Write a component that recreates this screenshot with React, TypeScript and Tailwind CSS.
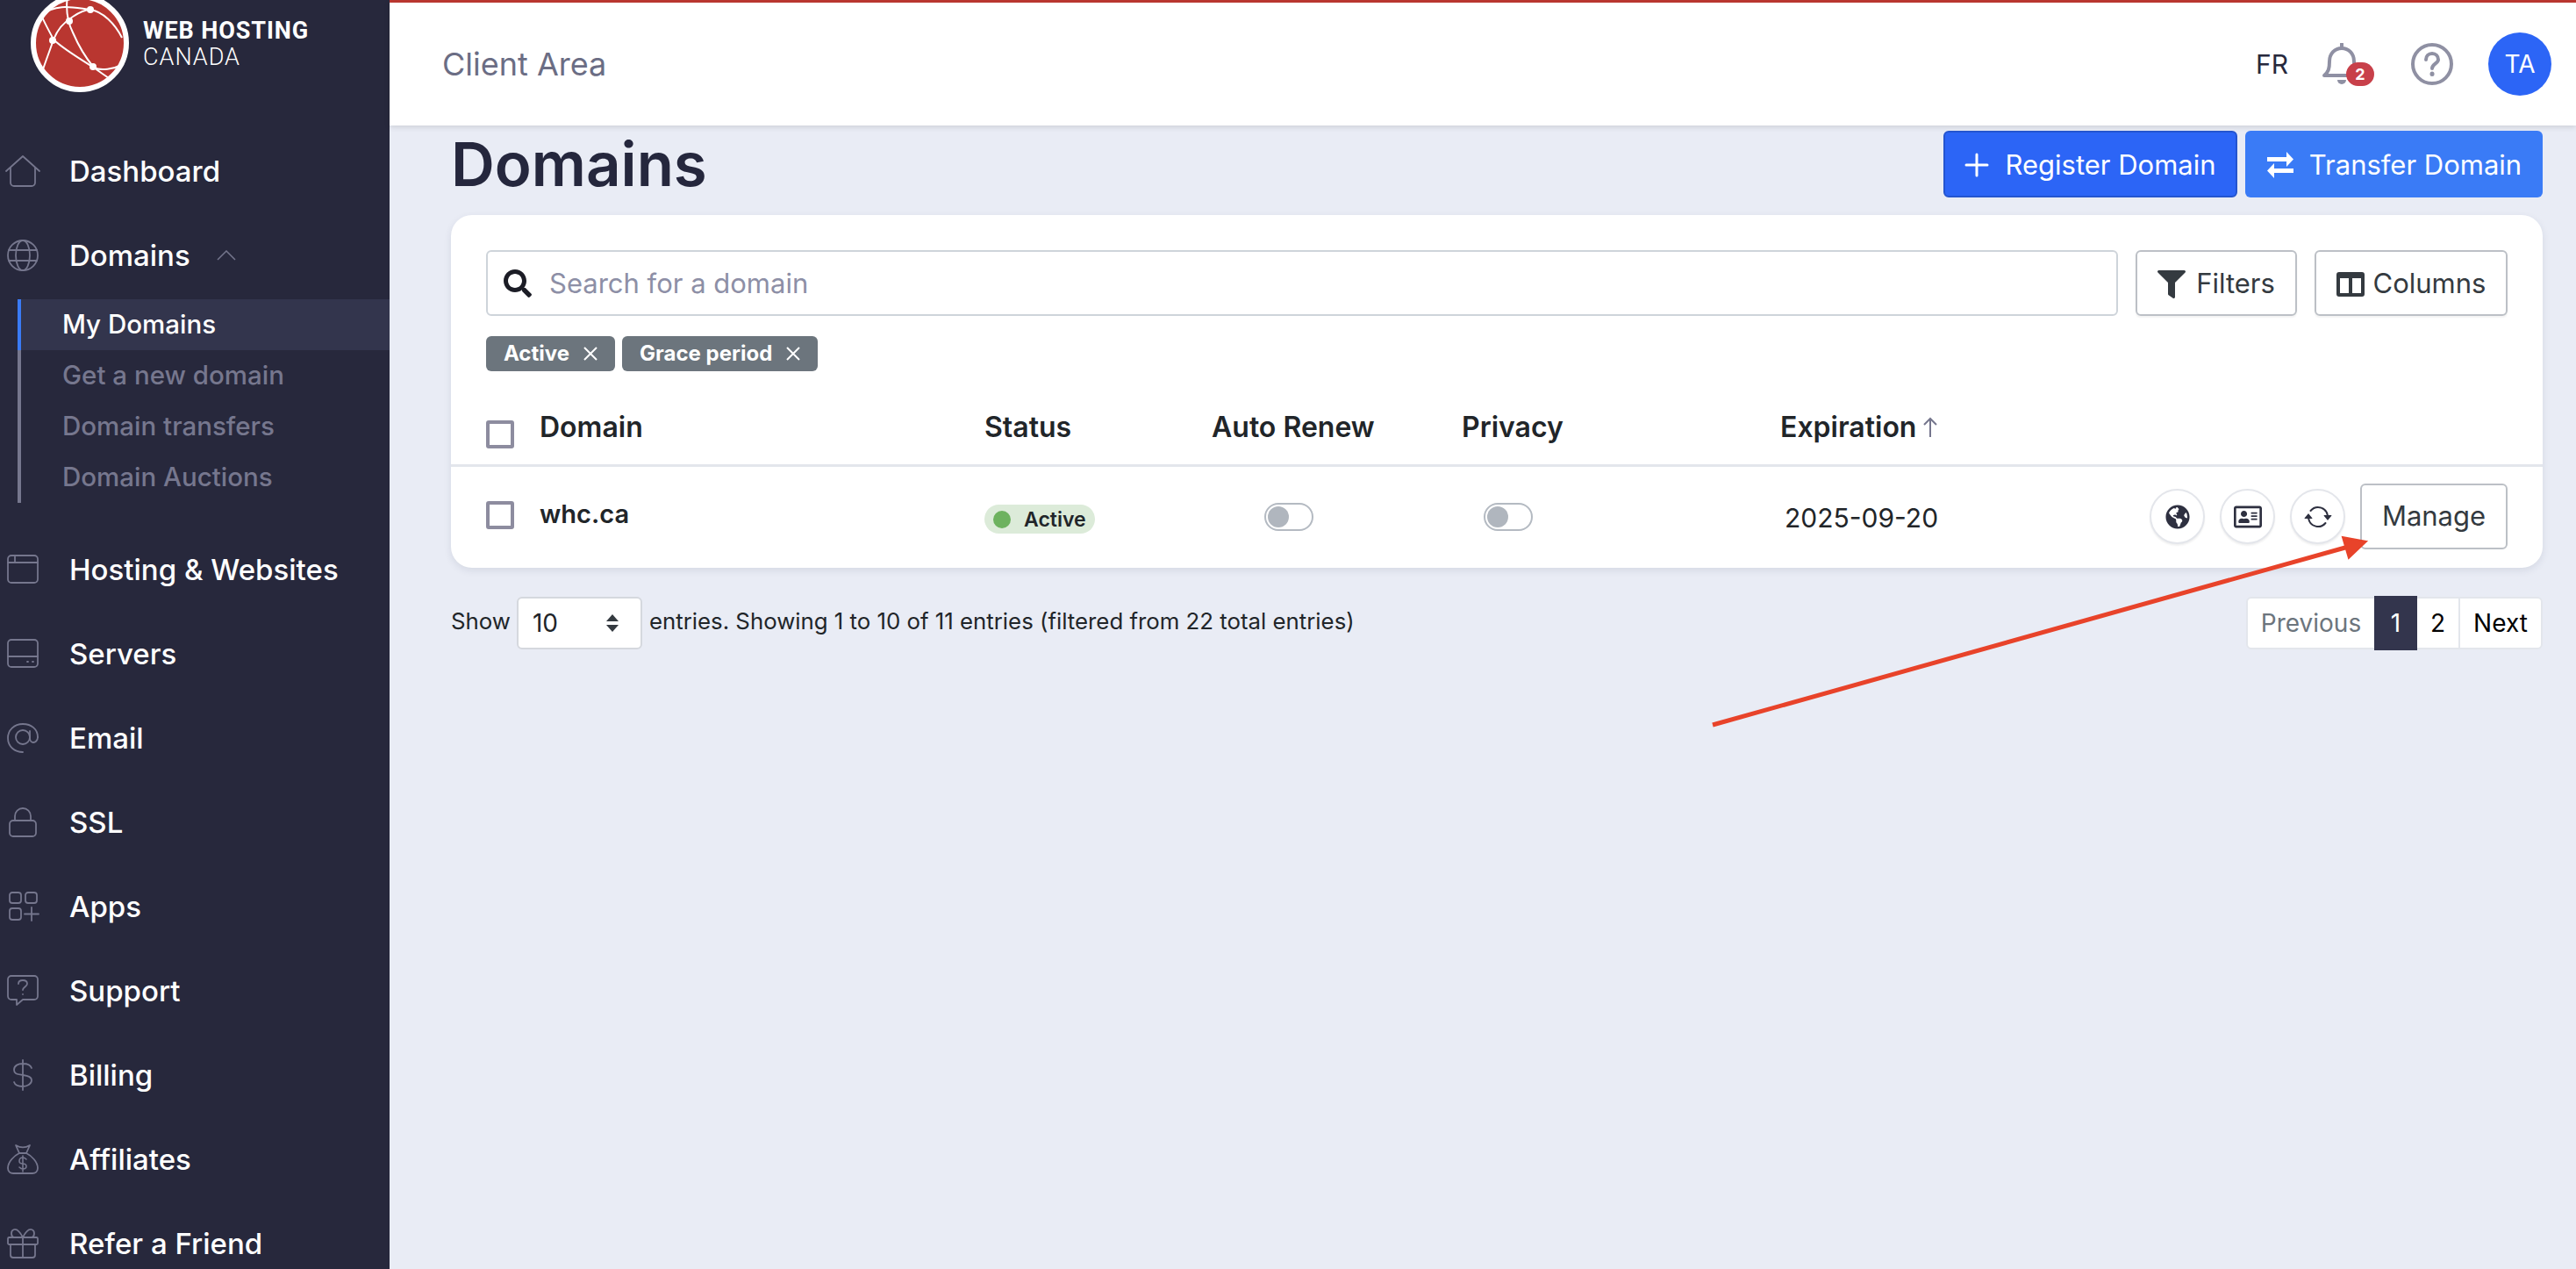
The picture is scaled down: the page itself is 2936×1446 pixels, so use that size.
import React from 'react';
import { FaFilter, FaGlobeAmericas, FaRegAddressCard, FaSearch } from 'react-icons/fa';
import { BsArrowRepeat } from 'react-icons/bs';

const ic = (children: React.ReactNode) => (
  <svg viewBox="0 0 40 36" fill="none" stroke="#75768d" strokeWidth="1.8" strokeLinecap="round" strokeLinejoin="round" className="h-9 w-10">
    {children}
  </svg>
);

const icons: Record<string, React.ReactNode> = {
  home: ic(<><path d="M1 18 20 1l19 17" /><path d="M6 14v17a4 4 0 0 0 4 4h20a4 4 0 0 0 4-4V14" /></>),
  globe: ic(<><circle cx="20" cy="18" r="17" /><ellipse cx="20" cy="18" rx="8" ry="17" /><path d="M4 12h32M4 24h32" /></>),
  browser: ic(<><rect x="3" y="2" width="34" height="31" rx="4" /><path d="M3 10h34M11 2v8" /></>),
  server: ic(<><rect x="3" y="2" width="34" height="31" rx="4" /><path d="M3 21h34M25 27h1M31 27h1" /></>),
  at: ic(<><path d="M37 17C37 8 30 2 20 2S3 9 3 18c0 10 8 16 17 16" /><circle cx="20" cy="17" r="8" /><path d="M28 10v8c0 3 2 5 4 5s5-2 5-6" /></>),
  lock: ic(<><rect x="5" y="16" width="30" height="18" rx="4" /><path d="M11 16v-5c0-5 4-9 9-9s9 4 9 9v5" /></>),
  apps: ic(<><rect x="5" y="2" width="13" height="12" rx="3" /><rect x="23" y="2" width="13" height="12" rx="3" /><rect x="5" y="20" width="13" height="13" rx="3" /><path d="M30 19v15M22 26.500h16" /></>),
  support: ic(<><path d="M7 1h26a4 4 0 0 1 4 4v19a4 4 0 0 1-4 4H20l-7 6v-6H7a4 4 0 0 1-4-4V5a4 4 0 0 1 4-4Z" /><path d="M15 10c0-3 2-4 5-4s5 1 5 4-5 4-5 7M20 22v0" /></>),
  dollar: ic(<><path d="M20 1v34M30 10c-1-3-5-5-10-5S10 7 10 12s4 5 10 6 10 2 10 6-5 7-10 7-9-2-10-5" /></>),
  bag: ic(<><path d="M12 2c5 3 11 3 16 0l-4 9h-8Z" /><path d="M16 11C10 14 3 21 3 28c0 4 3 6 6 6h22c3 0 6-2 6-6 0-7-7-14-13-17" /><path d="M24 18c-1-1-2-2-4-2s-4 1-4 4 2 3 4 3 4 1 4 3-2 3-4 3-3-1-4-2M20 14v18" strokeWidth="1.6" /></>),
  gift: ic(<><rect x="3" y="11" width="34" height="8" rx="1.500" /><path d="M6 19v12a3 3 0 0 0 3 3h22a3 3 0 0 0 3-3V19M20 11v23M20 11c-3-6-6-10-10-9s-4 8 0 9M20 11c3-6 6-10 10-9s4 8 0 9" /></>),
};

const lowerNav = [
  ['browser', 'Hosting & Websites'],
  ['server', 'Servers'],
  ['at', 'Email'],
  ['lock', 'SSL'],
  ['apps', 'Apps'],
  ['support', 'Support'],
  ['dollar', 'Billing'],
  ['bag', 'Affiliates'],
  ['gift', 'Refer a Friend'],
];

function NavItem({ icon, label, children }: { icon: string; label: string; children?: React.ReactNode }) {
  return (
    <div className="flex h-[96px] shrink-0 items-center">
      <span className="flex w-[79px] pl-[6px]">{icons[icon]}</span>
      <span className="pt-[1px] text-[33px] font-medium text-white">{label}</span>
      {children}
    </div>
  );
}

function Logo() {
  return (
    <div className="relative h-[147px] shrink-0">
      <svg viewBox="0 0 112 112" className="absolute left-[35px] top-[-7px] h-[112px] w-[112px]">
        <circle cx="56" cy="56" r="53" fill="#b93630" stroke="#fff" strokeWidth="6" />
        <g fill="none" stroke="#fff" strokeWidth="2">
          <path d="M12 24C30 10 50 16 68 18c14 2 28 16 36 32" />
          <path d="M42 2c-2 14 0 30 6 42 6 14 14 28 24 40 8 4 22 2 34-4" />
          <path d="M12 24c4 10 10 20 14 28 10 10 30 22 46 32 8 6 14 10 20 14" />
          <path d="M26 52c4-10 12-20 22-26 6-4 14-8 20-8" />
          <path d="M26 52c-4 12-8 22-12 34" />
        </g>
        <g fill="#fff">
          <circle cx="68" cy="18" r="4" />
          <circle cx="44" cy="31" r="4" />
          <circle cx="25" cy="53" r="4" />
          <circle cx="71" cy="83" r="4" />
        </g>
      </svg>
      <div className="absolute left-[163px] top-[18px] font-['Roboto',sans-serif] text-white">
        <div className="text-[27px] font-bold leading-[34px] tracking-[0.9px]">WEB HOSTING</div>
        <div className="text-[27px] font-light leading-[26px] tracking-[1px]">CANADA</div>
      </div>
    </div>
  );
}

function Sidebar() {
  return (
    <aside className="flex h-full w-[444px] shrink-0 flex-col overflow-hidden bg-[#27283c] font-['Inter',sans-serif]">
      <Logo />
      <NavItem icon="home" label="Dashboard" />
      <NavItem icon="globe" label="Domains">
        <svg viewBox="0 0 22 12" fill="none" stroke="#75768d" strokeWidth="1.5" className="ml-[30px] h-[12px] w-[22px]">
          <path d="M1 11 11 1l10 10" />
        </svg>
      </NavItem>
      <div className="mt-[2px] ml-[20px] flex shrink-0 flex-col border-l-4 border-[#76778e] text-[29.5px] font-medium text-[#76778e]">
        <div className="relative -ml-1 flex h-[58px] items-center border-l-4 border-[#3a7bf6] bg-[#33354d] pb-[2px] pl-[47px] text-white">My Domains</div>
        <div className="flex h-[58px] items-center pb-[2px] pl-[47px]">Get a new domain</div>
        <div className="flex h-[58px] items-center pb-[2px] pl-[47px]">Domain transfers</div>
        <div className="flex h-[58px] items-center pb-[2px] pl-[47px]">Domain Auctions</div>
      </div>
      <div className="mt-[28px] flex flex-col">
        {lowerNav.map(([icon, label]) => (
          <NavItem key={label} icon={icon} label={label} />
        ))}
      </div>
    </aside>
  );
}

function Header() {
  return (
    <header className="flex h-[143px] shrink-0 items-center border-t-[3px] border-[#b93630] bg-white pl-[60px] pr-[28px] shadow-[0_2px_6px_rgba(0,0,0,0.12)]">
      <span className="text-[36px] text-[#6b6d84]">Client Area</span>
      <div className="ml-auto flex items-center">
        <span className="text-[30px] text-[#27283c]">FR</span>
        <div className="relative ml-[38px] h-[48px] w-[52px]">
          <svg viewBox="0 0 52 48" fill="none" stroke="#8f90a3" strokeWidth="4" strokeLinejoin="round" className="h-[48px] w-[52px]">
            <path d="M3 37c5-4 6-8 6-16 0-9 6-15 14-15s14 6 14 15c0 8 1 12 6 16Z" />
            <path d="M23 1v5" strokeLinecap="round" />
            <path d="M18 42a5 5 0 0 0 10 0Z" fill="#8f90a3" stroke="none" />
          </svg>
          <span className="absolute left-[28px] top-[22px] flex h-[27px] w-[32px] items-center justify-center rounded-full bg-[#c8404a] text-[18px] font-bold text-white">2</span>
        </div>
        <svg viewBox="0 0 48 48" fill="none" stroke="#8f90a3" strokeWidth="4" strokeLinecap="round" className="ml-[50px] h-[48px] w-[48px]">
          <circle cx="24" cy="24" r="22" />
          <path d="M17 19c0-4 3-7 7-7s7 3 7 7-7 5-7 10" />
          <path d="M24 35v.5" strokeWidth="5" />
        </svg>
        <span className="ml-[40px] flex h-[72px] w-[72px] items-center justify-center rounded-full bg-[#2c65f6] text-[28px] text-white">TA</span>
      </div>
    </header>
  );
}

function Checkbox() {
  return <span className="block h-[32px] w-[32px] rounded-[3px] border-4 border-[#8d8c9f] bg-white" />;
}

function Toggle() {
  return (
    <span className="flex h-[32px] w-[56px] items-center rounded-full border-2 border-[#b4bac2] bg-white pl-[2px]">
      <span className="block h-[24px] w-[24px] rounded-full bg-[#b0b6be]" />
    </span>
  );
}

function Tag({ label }: { label: string }) {
  return (
    <span className="flex h-[40px] items-center gap-[16px] rounded-[6px] bg-[#6c757d] pl-[20px] pr-[20px] text-[24px] font-bold text-white">
      {label}
      <svg viewBox="0 0 16 16" stroke="#fff" strokeWidth="2" className="h-[16px] w-[16px]">
        <path d="M1 1l14 14M15 1 1 15" />
      </svg>
    </span>
  );
}

function RoundBtn({ children }: { children: React.ReactNode }) {
  return (
    <button className="flex h-[63px] w-[63px] items-center justify-center rounded-full border-2 border-[#e4e6eb] bg-white text-[#2e3040] shadow-[0_2px_2px_rgba(0,0,0,0.06)]">
      {children}
    </button>
  );
}

function Toolbar() {
  return (
    <div className="flex gap-[20px]">
      <div className="flex h-[75px] flex-1 items-center gap-[20px] rounded-[6px] border-2 border-[#ced4da] pl-[18px]">
        <FaSearch className="h-[32px] w-[32px] text-[#1c1d26]" />
        <input placeholder="Search for a domain" className="flex-1 bg-transparent pt-[2px] text-[31px] outline-none placeholder:text-[#8d8fa6]" />
      </div>
      <button className="flex h-[75px] w-[184px] items-center justify-center gap-[12px] rounded-[6px] border-2 border-[#bcc0c6] pt-[2px] text-[31px] text-[#343a40] shadow-[0_2px_2px_rgba(0,0,0,0.05)]">
        <FaFilter className="h-[32px] w-[32px]" />
        Filters
      </button>
      <button className="flex h-[75px] w-[220px] items-center justify-center gap-[10px] rounded-[6px] border-2 border-[#bcc0c6] pt-[2px] text-[31px] text-[#343a40] shadow-[0_2px_2px_rgba(0,0,0,0.05)]">
        <svg viewBox="0 0 32 28" className="h-[28px] w-[32px]">
          <path fillRule="evenodd" fill="#343a40" d="M3 0h26a3 3 0 0 1 3 3v22a3 3 0 0 1-3 3H3a3 3 0 0 1-3-3V3a3 3 0 0 1 3-3Zm1 7v17h10V7Zm14 0v17h10V7Z" />
        </svg>
        Columns
      </button>
    </div>
  );
}

function DomainsTable() {
  return (
    <div>
      <div className="flex h-[109px] items-center border-b-[3px] border-[#e3e6ec] px-[40px] pt-[21px] text-[32px] font-semibold text-[#212529]">
        <span className="w-[61px] pt-[16px]"><Checkbox /></span>
        <span className="w-[507px] leading-none">Domain</span>
        <span className="w-[259px] leading-none">Status</span>
        <span className="w-[285px] leading-none">Auto Renew</span>
        <span className="w-[363px] leading-none">Privacy</span>
        <span className="flex items-center gap-[6px] leading-none">
          Expiration
          <svg viewBox="0 0 20 24" fill="none" stroke="#75768d" strokeWidth="2" className="h-[24px] w-[20px]">
            <path d="M10 23V2M3 9l7-7 7 7" />
          </svg>
        </span>
      </div>
      <div className="flex h-[113px] items-center px-[40px] text-[#212529]">
        <span className="w-[61px] pb-[3px]"><Checkbox /></span>
        <span className="w-[507px] pb-[5px] text-[29px] font-semibold">whc.ca</span>
        <span className="w-[260px] pt-[6px]">
          <span className="inline-flex h-[33px] w-[126px] items-center gap-[15px] rounded-full bg-[#dcebd9] pl-[10px] text-[23px] font-semibold">
            <span className="h-[20px] w-[20px] rounded-full bg-[#6db25f]" />
            <span className="pt-[2px]">Active</span>
          </span>
        </span>
        <span className="w-[284px] pl-[59px]"><Toggle /></span>
        <span className="w-[363px] pl-[25px]"><Toggle /></span>
        <span className="pl-[5px] pt-[3px] text-[30px]">2025-09-20</span>
        <div className="ml-auto flex items-center gap-[17px]">
          <RoundBtn><FaGlobeAmericas className="h-[28px] w-[28px]" /></RoundBtn>
          <RoundBtn><FaRegAddressCard className="h-[32px] w-[32px]" /></RoundBtn>
          <RoundBtn><BsArrowRepeat className="h-[32px] w-[32px]" /></RoundBtn>
          <button className="flex h-[75px] w-[168px] items-center justify-center rounded-[6px] border-2 border-[#bcc0c6] text-[31px] text-[#343a40]">Manage</button>
        </div>
      </div>
    </div>
  );
}

function Footer() {
  return (
    <div className="mt-[33px] flex items-center text-[25.8px] text-[#212529]">
      <span className="pb-[3px]">Show</span>
      <span className="ml-[7px] flex h-[60px] w-[143px] items-center justify-between rounded-[6px] border-2 border-[#d5d8de] bg-white pl-[16px] pr-[24px] text-[28px]">
        10
        <svg viewBox="0 0 16 24" fill="#343a40" className="h-[24px] w-[16px]">
          <path d="M8 2l7 8H1ZM8 22l7-8H1Z" />
        </svg>
      </span>
      <span className="ml-[8px] pb-[3px]">entries. Showing 1 to 10 of 11 entries (filtered from 22 total entries)</span>
      <div className="ml-auto flex h-[60px] items-center rounded-[6px] border-2 border-[#e3e6ec] bg-white text-[28px] text-black">
        <span className="flex w-[144px] justify-center text-[#6c757d]">Previous</span>
        <span className="flex h-[62px] w-[49px] items-center justify-center bg-[#33354d] text-white">1</span>
        <span className="flex h-full w-[49px] items-center justify-center border-r-2 border-[#e3e6ec]">2</span>
        <span className="flex w-[92px] justify-center">Next</span>
      </div>
    </div>
  );
}

export default function App() {
  return (
    <div className="relative flex h-[1446px] w-full overflow-hidden bg-[#e9ecf5] font-['Inter',sans-serif]">
      <Sidebar />
      <main className="flex min-w-0 flex-1 flex-col">
        <Header />
        <div className="pl-[70px] pr-[38px] pt-[6px]">
          <div className="flex h-[76px] items-center">
            <h1 className="text-[69px] font-semibold leading-none text-[#25273d]">Domains</h1>
            <button className="ml-auto flex h-[76px] w-[335px] items-center justify-center gap-[18px] rounded-[6px] border-2 border-[#2455cf] bg-[#2c65f6] pt-[2px] text-[31px] text-white">
              <svg viewBox="0 0 28 28" stroke="#fff" strokeWidth="3" strokeLinecap="round" className="h-[28px] w-[28px]">
                <path d="M14 2v24M2 14h24" />
              </svg>
              Register Domain
            </button>
            <button className="ml-[9px] flex h-[76px] w-[339px] items-center justify-center gap-[17px] rounded-[6px] bg-[#3a7bf6] pt-[2px] text-[31px] text-white">
              <svg viewBox="0 0 32 32" className="h-[32px] w-[32px]" fill="#fff">
                <path d="M1 7h22V1l8 8.500-8 8.500v-6H1ZM31 20H9v-6l-8 8.500L9 31v-6h22Z" />
              </svg>
              Transfer Domain
            </button>
          </div>
          <section className="mt-[20px] h-[402px] rounded-[24px] bg-white shadow-[0_3px_8px_rgba(40,45,80,0.1)]">
            <div className="px-[40px] pt-[40px]">
              <Toolbar />
              <div className="mt-[23px] flex gap-[8px]">
                <Tag label="Active" />
                <Tag label="Grace period" />
              </div>
            </div>
            <DomainsTable />
          </section>
          <Footer />
        </div>
      </main>
      <svg className="pointer-events-none absolute inset-0 h-full w-full">
        <path d="M1952 826 2680 622" stroke="#e8432a" strokeWidth="5" />
        <path d="M2697 617 2670 612 2677 636Z" fill="#e8432a" stroke="#e8432a" strokeWidth="2" />
      </svg>
    </div>
  );
}
